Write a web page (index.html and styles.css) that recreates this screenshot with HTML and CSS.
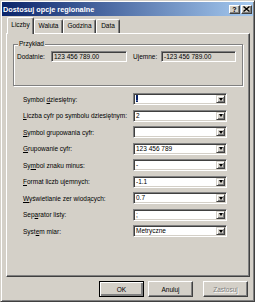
FILE: index.html
```html
<!DOCTYPE html>
<html lang="pl">
<head>
    <meta charset="UTF-8">
    <title>Dostosuj opcje regionalne</title>
    <link rel="stylesheet" href="styles.css">
</head>
<body>
    <div class="window">
        <div class="titlebar">
            <span class="title">Dostosuj opcje regionalne</span>
            <span class="tbtn help">?</span>
            <span class="tbtn close">
                <svg width="7" height="6" viewBox="0 0 7 6"><path d="M0.5 0.5 L6.5 5.5 M6.5 0.5 L0.5 5.5" stroke="#000" stroke-width="1.4"/></svg>
            </span>
        </div>

        <div class="tabs">
            <div class="tab active" style="width:27px">Liczby</div>
            <div class="tab" style="width:29px">Waluta</div>
            <div class="tab" style="width:33px">Godzina</div>
            <div class="tab" style="width:24px">Data</div>
        </div>

        <div class="panel">
            <fieldset class="group">
                <legend>Przykład</legend>
                <div class="sample">
                    <span class="sample-label">Dodatnie:</span>
                    <span class="field wide">123 456 789.00</span>
                    <span class="sample-label second">Ujemne:</span>
                    <span class="field">-123 456 789.00</span>
                </div>
            </fieldset>

            <div class="settings">
                <label>Symbol <u>d</u>ziesiętny:</label>
                <div class="combo"><span class="value"><span class="sel">.</span></span><span class="arrow"></span></div>

                <label><u>L</u>iczba cyfr po symbolu dziesiętnym:</label>
                <div class="combo"><span class="value">2</span><span class="arrow"></span></div>

                <label><u>S</u>ymbol grupowania cyfr:</label>
                <div class="combo"><span class="value"></span><span class="arrow"></span></div>

                <label><u>G</u>rupowanie cyfr:</label>
                <div class="combo"><span class="value">123 456 789</span><span class="arrow"></span></div>

                <label>Sy<u>m</u>bol znaku minus:</label>
                <div class="combo"><span class="value">-</span><span class="arrow"></span></div>

                <label><u>F</u>ormat liczb ujemnych:</label>
                <div class="combo"><span class="value">-1.1</span><span class="arrow"></span></div>

                <label><u>W</u>yświetlanie zer wiodących:</label>
                <div class="combo"><span class="value">0.7</span><span class="arrow"></span></div>

                <label>Sep<u>a</u>rator listy:</label>
                <div class="combo"><span class="value">;</span><span class="arrow"></span></div>

                <label>Syst<u>e</u>m miar:</label>
                <div class="combo"><span class="value">Metryczne</span><span class="arrow"></span></div>
            </div>
        </div>

        <div class="buttons">
            <button class="btn default">OK</button>
            <button class="btn">Anuluj</button>
            <button class="btn apply" disabled>Zastosuj</button>
        </div>
    </div>
</body>
</html>
```

FILE: styles.css
```css
* {
    box-sizing: border-box;
}
body {
    margin: 0;
    font-family: "Liberation Sans", Arial, sans-serif;
    font-size: 6.5px;
    color: #000;
    background-color: #d4d0c8;
}
.window {
    width: 255px;
    height: 302px;
    padding: 1px;
    border: 1px solid;
    border-color: #d4d0c8 #404040 #404040 #d4d0c8;
    box-shadow: inset 1px 1px #fff, inset -1px -1px #808080;
    background-color: #d4d0c8;
}

/* title bar */
.titlebar {
    height: 14px;
    display: flex;
    align-items: center;
    padding: 0 1px 0 1px;
    background: linear-gradient(to right, #0a246a, #a6caf0);
}
.title {
    flex: 1;
    color: #fff;
    font-weight: bold;
    font-size: 7.3px;
    white-space: nowrap;
}
.tbtn {
    width: 11px;
    height: 9px;
    display: flex;
    align-items: center;
    justify-content: center;
    background-color: #d4d0c8;
    border: 1px solid;
    border-color: #fff #404040 #404040 #fff;
    box-shadow: inset -1px -1px #808080;
    font-weight: bold;
    font-size: 7px;
    line-height: 7px;
}
.tbtn.help {
    margin-right: 1px;
}

/* tabs */
.tabs {
    display: flex;
    align-items: flex-end;
    height: 16px;
    margin-top: 1px;
    padding-left: 5px;
}
.tab {
    height: 14px;
    text-align: center;
    line-height: 12px;
    border-left: 1px solid #fff;
    border-top: 1px solid #fff;
    border-right: 1px solid #404040;
    border-radius: 2px 2px 0 0;
    box-shadow: inset -1px 0 #808080;
    background-color: #d4d0c8;
}
.tab.active {
    height: 17px;
    margin-bottom: -1px;
    line-height: 14px;
    position: relative;
    z-index: 1;
}

/* page */
.panel {
    width: 244px;
    height: 244px;
    margin-left: 4px;
    border: 1px solid;
    border-color: #fff #404040 #404040 #fff;
    box-shadow: inset -1px -1px #808080;
}
.group {
    width: 230px;
    height: 46px;
    margin: 6px 0 0 6px;
    padding: 3px 6px 0 3px;
    border: 1px solid #808080;
    box-shadow: inset 1px 1px #fff, 1px 1px #fff;
}
.group legend {
    margin-left: 1px;
    padding: 0 1px;
    line-height: 8px;
    background-color: #d4d0c8;
}
.sample {
    display: flex;
    align-items: center;
}
.sample-label {
    width: 34px;
}
.sample-label.second {
    width: 28px;
    margin-left: 6px;
}
.field {
    width: 75px;
    height: 11px;
    padding-left: 2px;
    line-height: 9px;
    white-space: nowrap;
    border: 1px solid;
    border-color: #808080 #fff #fff #808080;
    box-shadow: inset 1px 1px #404040, inset -1px -1px #d4d0c8;
}
.field.wide {
    width: 76px;
}

.settings {
    display: grid;
    grid-template-columns: 110px 94px;
    grid-auto-rows: 12px;
    row-gap: 4.5px;
    margin: 7px 0 0 16px;
    align-items: center;
}
.settings label {
    white-space: nowrap;
}
.combo {
    height: 12px;
    display: flex;
    border: 1px solid;
    border-color: #808080 #fff #fff #808080;
    box-shadow: inset 1px 1px #404040, inset -1px -1px #d4d0c8;
    padding: 1px;
}
.combo .value {
    flex: 1;
    background-color: #fff;
    padding-left: 1px;
    line-height: 8px;
    white-space: nowrap;
}
.combo .sel {
    background-color: #0a246a;
    color: #fff;
}
.combo .arrow {
    width: 9px;
    display: flex;
    align-items: center;
    justify-content: center;
    background-color: #d4d0c8;
    border: 1px solid;
    border-color: #d4d0c8 #404040 #404040 #d4d0c8;
    box-shadow: inset 1px 1px #fff, inset -1px -1px #808080;
}
.combo .arrow::after {
    content: "";
    border-left: 2.5px solid transparent;
    border-right: 2.5px solid transparent;
    border-top: 3px solid #000;
}

/* dialog buttons */
.buttons {
    display: flex;
    justify-content: flex-end;
    margin-top: 4px;
    padding-right: 5px;
}
.btn {
    width: 45px;
    height: 16px;
    padding: 0;
    font-family: inherit;
    font-size: 6.5px;
    color: #000;
    background-color: #d4d0c8;
    border: 1px solid;
    border-color: #fff #404040 #404040 #fff;
    box-shadow: inset -1px -1px #808080;
}
.btn.default {
    border-color: #000;
    box-shadow: inset 1px 1px #fff, inset -2px -2px #808080, inset -1px -1px #404040;
    margin-right: 4px;
}
.btn.apply {
    margin-left: 10px;
    color: #808080;
    text-shadow: 1px 1px #fff;
}
```
